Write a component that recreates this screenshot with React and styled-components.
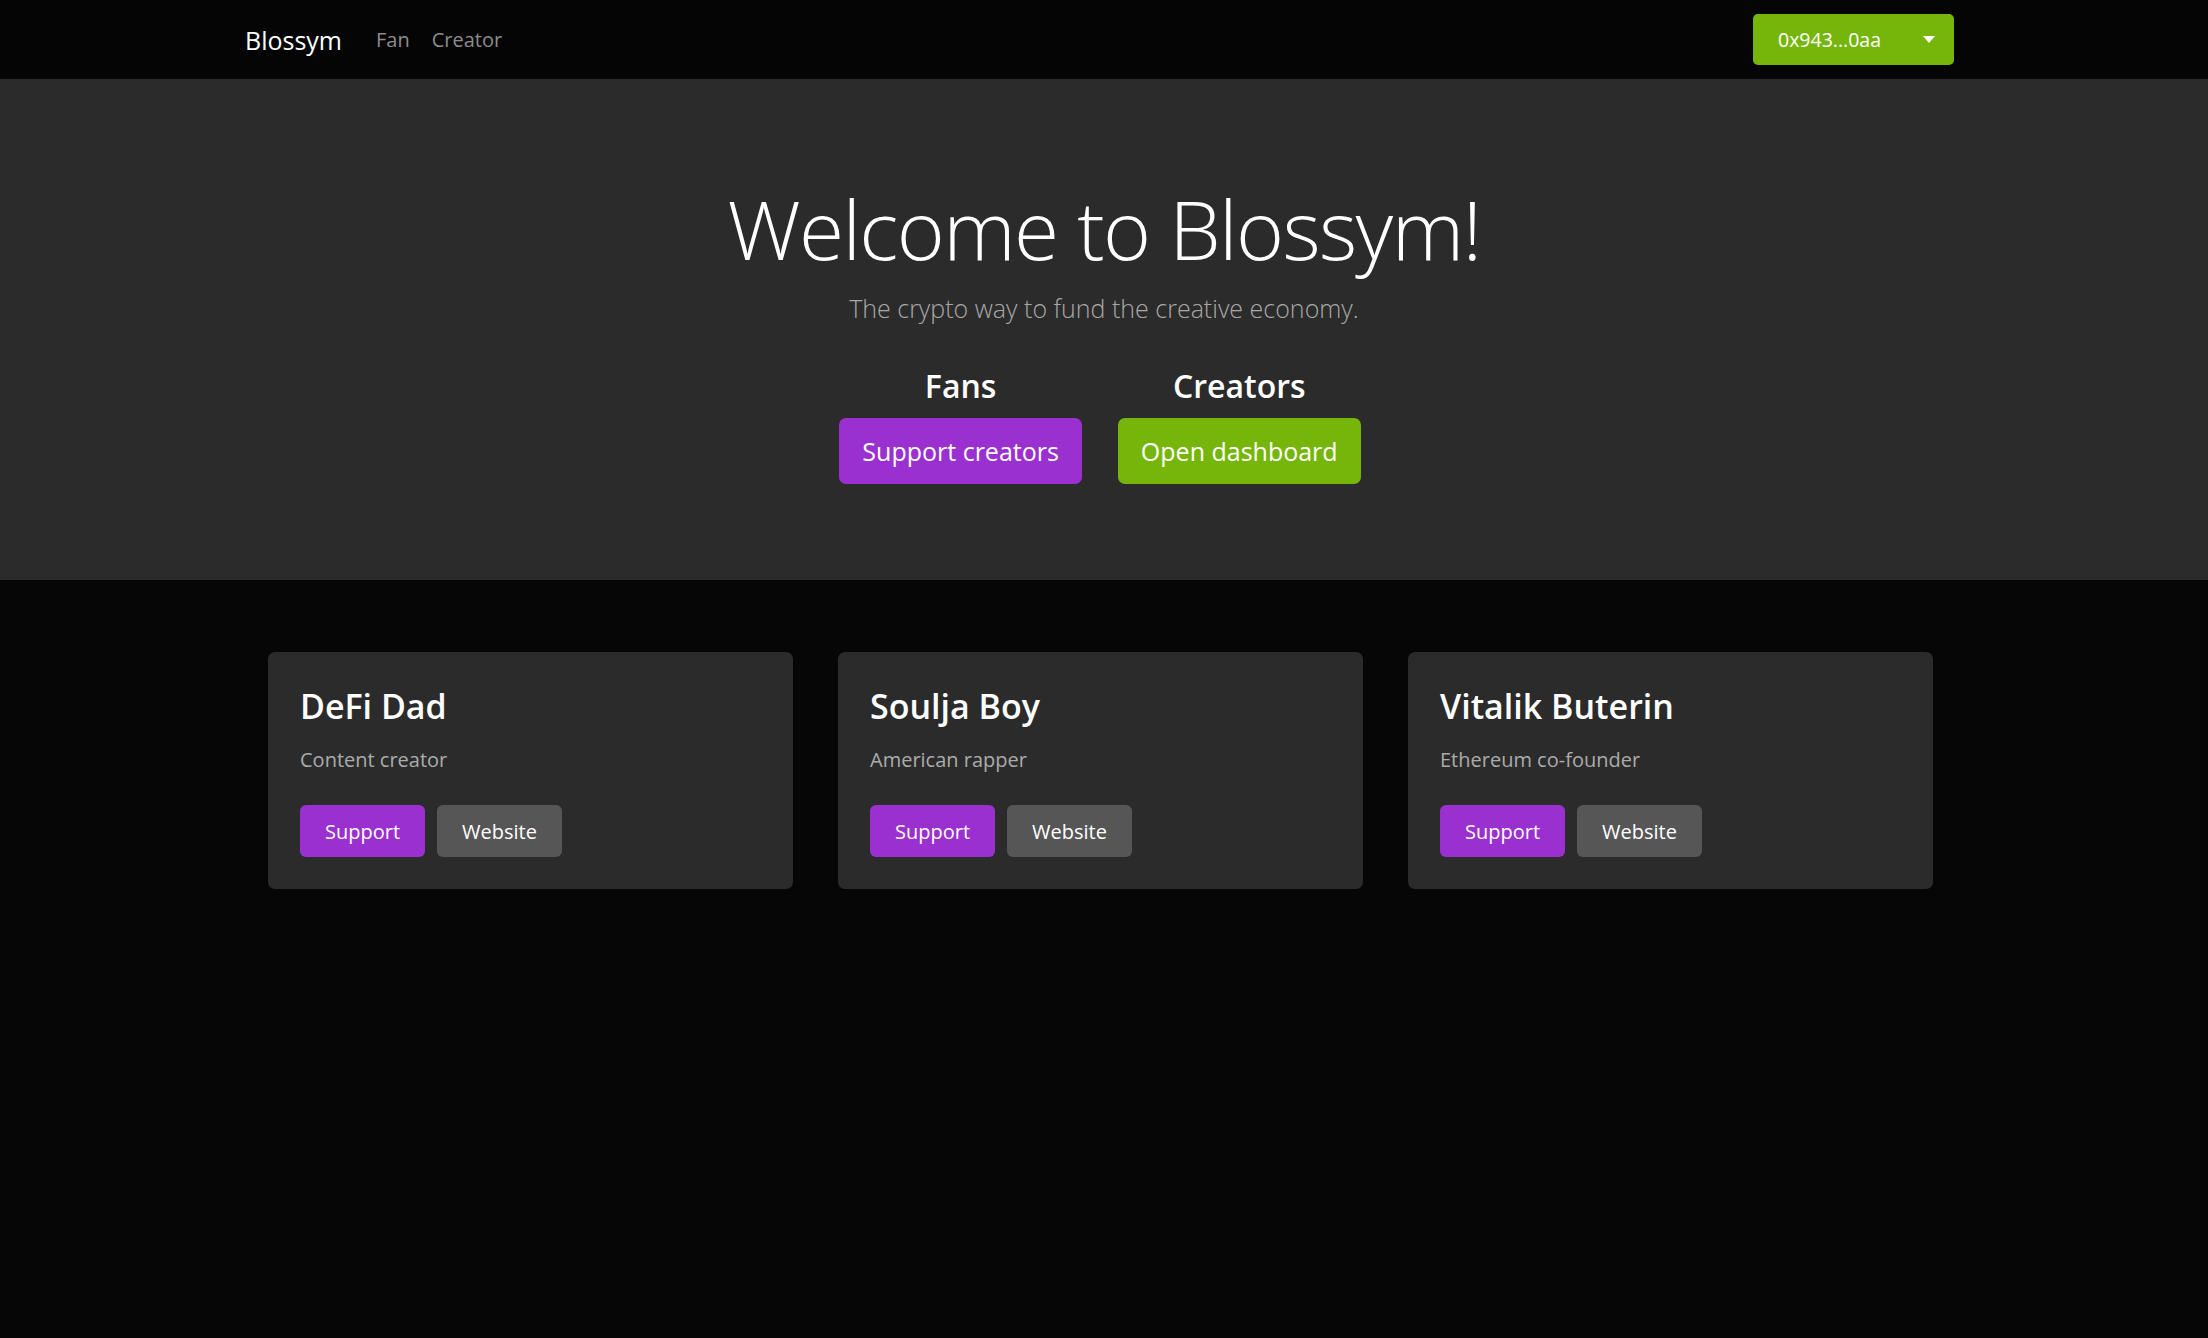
import styled, { createGlobalStyle } from 'styled-components';

const GlobalStyle = createGlobalStyle`
  html, body {
    margin: 0;
    padding: 0;
    background: #060606;
    font-family: "Open Sans", "Noto Sans", "Liberation Sans", sans-serif;
    color: #fff;
  }
  * { box-sizing: border-box; }
`;

const Page = styled.div`
  min-height: 1338px;
  background: #060606;
`;

const Navbar = styled.nav`
  height: 79px;
  background: #050505;
  display: flex;
  align-items: center;
  justify-content: space-between;
  padding: 0 254px 0 245px;
`;

const NavLeft = styled.div`
  display: flex;
  align-items: center;
`;

const Brand = styled.a`
  font-size: 25px;
  color: #fff;
  text-decoration: none;
  margin-right: 23px;
`;

const NavLink = styled.a`
  font-size: 20px;
  color: #8c8c8c;
  text-decoration: none;
  padding: 0 11px;
`;

const WalletButton = styled.button`
  width: 201px;
  height: 51px;
  border: none;
  border-radius: 5px;
  background: #76b60a;
  color: #fff;
  font-family: inherit;
  font-size: 19.5px;
  display: flex;
  align-items: center;
  justify-content: space-between;
  padding: 0 19px 0 25px;
  cursor: pointer;
`;

const Caret = styled.span`
  width: 0;
  height: 0;
  border-left: 6px solid transparent;
  border-right: 6px solid transparent;
  border-top: 7px solid #fff;
`;

const Hero = styled.section`
  background: #2b2b2b;
  padding: 100px 0 96px;
  display: flex;
  flex-direction: column;
  align-items: center;
  text-align: center;
`;

const Title = styled.h1`
  margin: 0;
  font-size: 82px;
  font-weight: 300;
  line-height: 1.2;
  letter-spacing: -1.6px;
  color: #fff;
`;

const Lead = styled.p`
  margin: 13px 0 0;
  font-size: 25px;
  font-weight: 300;
  line-height: 1.5;
  color: #a8a8a8;
`;

const Choices = styled.div`
  display: flex;
  gap: 36px;
  margin-top: 39px;
  padding-right: 8px;
`;

const Choice = styled.div`
  display: flex;
  flex-direction: column;
  align-items: center;
  gap: 13px;
`;

const ChoiceHeading = styled.h4`
  margin: 0;
  font-size: 32px;
  font-weight: 600;
  line-height: 1.2;
`;

const Button = styled.button`
  border: none;
  border-radius: ${p => (p.$large ? '7px' : '6px')};
  height: ${p => (p.$large ? '66px' : '52px')};
  padding: ${p => (p.$large ? '0 23px' : '0 25px')};
  font-family: inherit;
  font-size: ${p => (p.$large ? '25px' : '20px')};
  color: #fff;
  background: ${p =>
    p.$variant === 'green' ? '#76b60a' : p.$variant === 'grey' ? '#565656' : '#9b30d0'};
  cursor: pointer;
`;

const Cards = styled.main`
  display: grid;
  grid-template-columns: repeat(3, 525px);
  gap: 45px;
  padding: 72px 0 0 268px;
`;

const Card = styled.div`
  background: #2b2b2b;
  border-radius: 7px;
  padding: 34px 32px 32px;
  display: flex;
  flex-direction: column;
`;

const CardTitle = styled.h3`
  margin: 0;
  font-size: 34px;
  font-weight: 600;
  line-height: 1.2;
`;

const CardText = styled.p`
  margin: 18px 0 0;
  font-size: 20px;
  line-height: 1.5;
  color: #ababab;
`;

const CardActions = styled.div`
  display: flex;
  gap: 12px;
  margin-top: 30px;
`;

const creators = [
  { name: 'DeFi Dad', role: 'Content creator' },
  { name: 'Soulja Boy', role: 'American rapper' },
  { name: 'Vitalik Buterin', role: 'Ethereum co-founder' },
];

export default function App() {
  return (
    <Page>
      <GlobalStyle />
      <Navbar>
        <NavLeft>
          <Brand href="#">Blossym</Brand>
          <NavLink href="#">Fan</NavLink>
          <NavLink href="#">Creator</NavLink>
        </NavLeft>
        <WalletButton>
          <span>0x943...0aa</span>
          <Caret />
        </WalletButton>
      </Navbar>
      <Hero>
        <Title>Welcome to Blossym!</Title>
        <Lead>The crypto way to fund the creative economy.</Lead>
        <Choices>
          <Choice>
            <ChoiceHeading>Fans</ChoiceHeading>
            <Button $large>Support creators</Button>
          </Choice>
          <Choice>
            <ChoiceHeading>Creators</ChoiceHeading>
            <Button $large $variant="green">Open dashboard</Button>
          </Choice>
        </Choices>
      </Hero>
      <Cards>
        {creators.map(c => (
          <Card key={c.name}>
            <CardTitle>{c.name}</CardTitle>
            <CardText>{c.role}</CardText>
            <CardActions>
              <Button>Support</Button>
              <Button $variant="grey">Website</Button>
            </CardActions>
          </Card>
        ))}
      </Cards>
    </Page>
  );
}
